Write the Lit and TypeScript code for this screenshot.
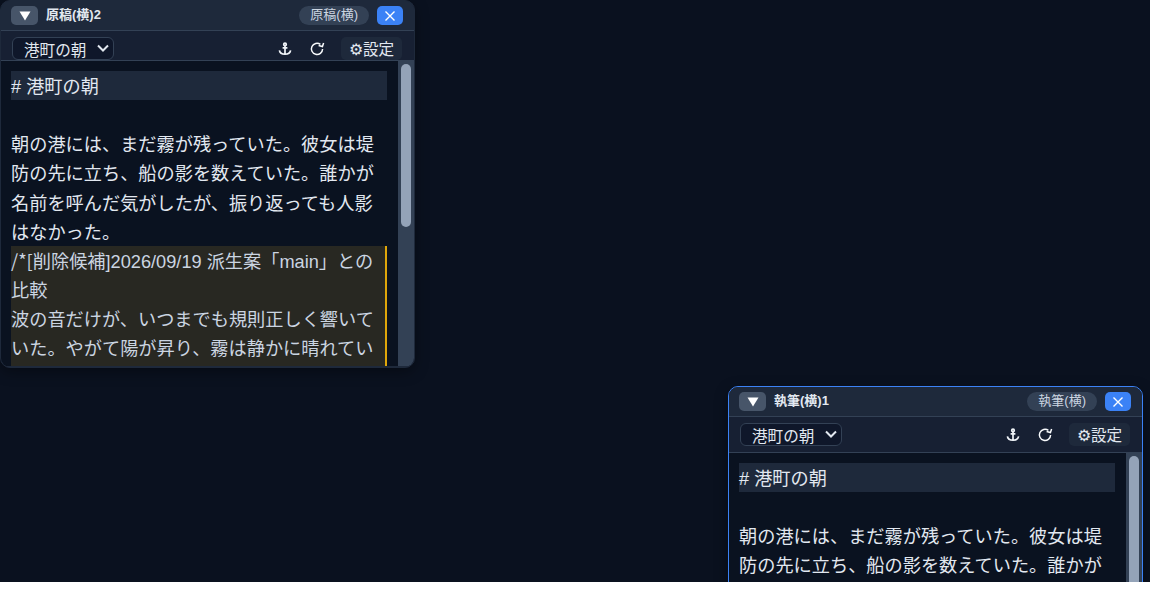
import { LitElement, html, css } from "lit";
import { customElement, property } from "lit/decorators.js";

@customElement("editor-window")
class EditorWindow extends LitElement {
  @property() name = "";
  @property() kind = "";
  @property({ type: Boolean }) active = false;
  @property({ type: Boolean }) tight = false;
  @property({ type: Number }) thumb = 163;

  static styles = css`
    :host {
      display: block;
      font-family: "Noto Sans CJK JP", "Noto Sans", sans-serif;
    }
    .win {
      width: 415px;
      height: 368px;
      box-sizing: border-box;
      border: 1px solid #1e293b;
      border-radius: 10px;
      padding-bottom: 1px;
      overflow: hidden;
      display: flex;
      flex-direction: column;
      background: #1e293b;
      box-shadow: 0 4px 14px rgba(0, 0, 0, 0.35);
    }
    .win.active {
      border-color: #3b82f6;
    }
    .head {
      height: 29px;
      flex: none;
      display: flex;
      align-items: center;
      padding: 0 10px;
      background: #1e293b;
      border-bottom: 1px solid #334155;
    }
    .fold {
      width: 27px;
      height: 19px;
      border-radius: 5px;
      background: #475569;
      display: flex;
      align-items: center;
      justify-content: center;
      margin-right: 8px;
    }
    .title {
      font-family: "Liberation Sans", "Noto Sans CJK JP", sans-serif;
      font-size: 13px;
      font-weight: 700;
      line-height: 17px;
      padding-bottom: 2px;
      color: #e2e8f0;
      flex: 1;
    }
    .pill {
      font-family: "Liberation Sans", "Noto Sans CJK JP", sans-serif;
      height: 19px;
      box-sizing: border-box;
      padding: 0 11px 2px;
      border-radius: 10px;
      background: #334155;
      color: #cbd5e1;
      font-size: 13px;
      line-height: 17px;
      margin-right: 8px;
    }
    .close {
      width: 26px;
      height: 19px;
      border-radius: 5px;
      background: #3b82f6;
      display: flex;
      align-items: center;
      justify-content: center;
      margin-right: 1px;
    }
    .tools {
      flex: none;
      display: flex;
      align-items: flex-start;
      padding: 6px 12px 6px 11px;
      background: #172033;
      border-bottom: 1px solid #334155;
    }
    .tools.tight {
      padding-bottom: 0;
    }
    .pick {
      position: relative;
      width: 102px;
      height: 23px;
    }
    select {
      appearance: none;
      display: block;
      width: 100%;
      height: 100%;
      box-sizing: border-box;
      font-family: inherit;
      font-size: 15.6px;
      color: #e2e8f0;
      background: #0f172a;
      border: 1px solid #334155;
      border-radius: 6px;
      padding: 0 0 0 11px;
      outline: none;
    }
    .chev {
      position: absolute;
      right: 5px;
      top: 7px;
      pointer-events: none;
    }
    .spacer {
      flex: 1;
    }
    .ico {
      width: 32px;
      height: 23px;
      display: flex;
      align-items: center;
      justify-content: center;
    }
    .set {
      margin-left: 8px;
      height: 23px;
      width: 61px;
      border-radius: 5px;
      background: #1e293b;
      color: #e2e8f0;
      font-size: 15.6px;
      line-height: 23px;
      text-align: center;
      white-space: nowrap;
    }
    .body {
      flex: 1;
      min-height: 0;
      display: flex;
      background: #0a1220;
    }
    .doc {
      flex: 1;
      min-width: 0;
      padding: 10px 11px 0 10px;
      overflow: hidden;
      font-size: 18.2px;
      line-height: 1.6;
      color: #e2e8f0;
      word-break: break-all;
    }
    .doc p {
      margin: 0;
    }
    .t {
      font-family: "Liberation Sans", "Noto Sans CJK JP", sans-serif;
      line-height: 1;
    }
    .mark {
      font-family: "Noto Sans CJK JP", sans-serif;
    }
    .h {
      background: #1e293b;
    }
    .del {
      background: #282822;
      border-right: 2px solid #dfa60a;
      color: #cbd5e1;
    }
    .bar {
      flex: none;
      width: 16px;
      background: #334155;
      padding: 3px 3px 0;
      box-sizing: border-box;
    }
    .thumb {
      width: 10px;
      border-radius: 5px;
      background: #94a3b8;
    }
  `;

  render() {
    return html`
      <div class="win ${this.active ? "active" : ""}">
        <div class="head">
          <div class="fold">
            <svg width="12" height="10" viewBox="0 0 12 10"><path d="M0.5 0.5H11.5L6 9.5Z" fill="#fff" /></svg>
          </div>
          <div class="title">${this.name}</div>
          <div class="pill">${this.kind}</div>
          <div class="close">
            <svg width="12" height="12" viewBox="0 0 12 12"><path d="M1.5 1.5L10.5 10.5M10.5 1.5L1.5 10.5" stroke="#fff" stroke-width="1.4" fill="none" /></svg>
          </div>
        </div>
        <div class="tools ${this.tight ? "tight" : ""}">
          <div class="pick">
            <select><option>港町の朝</option></select>
            <svg class="chev" width="12" height="8" viewBox="0 0 12 8" fill="none" stroke="#e2e8f0" stroke-width="2"><path d="M1 1.5L6 6.5L11 1.5" /></svg>
          </div>
          <div class="spacer"></div>
          <div class="ico">
            <svg width="14" height="14" viewBox="0 0 14 14" fill="none" stroke="#f1f5f9" stroke-width="1.7">
              <circle cx="7" cy="2.4" r="1.3" /><path d="M7 3.8V12.2M4.6 5.8H9.4M1.4 8.4C1.8 11 4.5 12.2 7 12.2C9.5 12.2 12.2 11 12.6 8.4" />
            </svg>
          </div>
          <div class="ico">
            <svg width="16" height="16" viewBox="0 0 16 16" fill="none" stroke="#f8fafc" stroke-width="1.5">
              <path d="M11.4 3.4A5.6 5.6 0 1 0 13.6 8" /><path d="M14.6 2L13.4 5.6L9.6 4.6" />
            </svg>
          </div>
          <div class="set">⚙設定</div>
        </div>
        <div class="body">
          <div class="doc">
            <p class="h"><span class="t"># 港町の朝</span></p>
            <p>&nbsp;</p>
            <p>朝の港には、まだ霧が残っていた。彼女は堤防の先に立ち、船の影を数えていた。誰かが名前を呼んだ気がしたが、振り返っても人影はなかった。</p>
            <div class="del">
              <p><span class="t"><span class="mark">/*[</span>削除候補]2026/09/19 派生案「main」との比較</span></p>
              <p>波の音だけが、いつまでも規則正しく響いていた。やがて陽が昇り、霧は静かに晴れていった。</p>
            </div>
          </div>
          <div class="bar"><div class="thumb" style="height:${this.thumb}px"></div></div>
        </div>
      </div>
    `;
  }
}

@customElement("app-root")
class AppRoot extends LitElement {
  static styles = css`
    :host {
      display: block;
      position: relative;
      height: 582px;
      overflow: hidden;
      background: #0a111f;
    }
    .w1 {
      position: absolute;
      left: 0;
      top: 0;
    }
    .w2 {
      position: absolute;
      left: 728px;
      top: 386px;
    }
  `;
  render() {
    return html`
      <editor-window class="w1" name="原稿(横)2" kind="原稿(横)" tight></editor-window>
      <editor-window class="w2" name="執筆(横)1" kind="執筆(横)" active></editor-window>
    `;
  }
}
